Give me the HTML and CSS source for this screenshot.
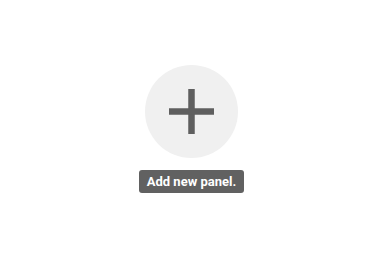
FILE: index.html
```html
<!DOCTYPE html>
<html>
<head>
<meta charset="utf-8">
<link rel="stylesheet" href="styles.css">
</head>
<body>
<div class="stage">
  <button class="add-btn" aria-label="Add new panel">
    <svg width="45" height="45" viewBox="0 0 45 45">
      <rect x="19.25" y="0" width="6.5" height="45" fill="#5f5f5f"/>
      <rect x="0" y="19.25" width="45" height="6.5" fill="#5f5f5f"/>
    </svg>
  </button>
  <div class="tooltip">Add new panel.</div>
</div>
</body>
</html>
```
FILE: styles.css
```css
html, body {
  margin: 0;
  padding: 0;
  background: #fff;
}
.stage {
  width: 387px;
  height: 276px;
  box-sizing: border-box;
  padding: 65px 4px 0 0;
  display: flex;
  flex-direction: column;
  align-items: center;
  font-family: Roboto, "Liberation Sans", sans-serif;
}
.add-btn {
  width: 93px;
  height: 93px;
  border-radius: 50%;
  border: none;
  padding: 0;
  background: #f0f0f0;
  display: flex;
  align-items: center;
  justify-content: center;
}
.tooltip {
  margin-top: 12px;
  height: 23px;
  box-sizing: border-box;
  padding: 0 8px;
  background: #616161;
  color: #fff;
  border-radius: 3px;
  font-size: 13px;
  font-weight: 700;
  line-height: 23px;
}
```
